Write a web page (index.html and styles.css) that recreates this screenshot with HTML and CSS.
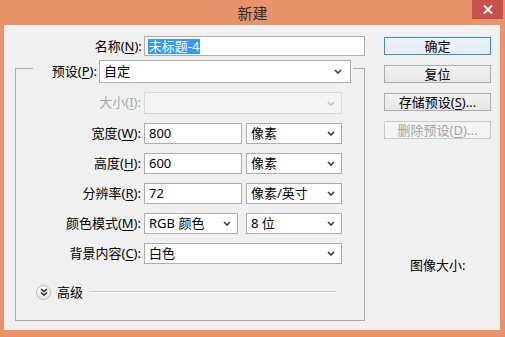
FILE: index.html
```html
<!DOCTYPE html>
<html>
<head>
<meta charset="utf-8">
<link rel="stylesheet" href="styles.css">
</head>
<body>
<div class="window">
  <div class="titlebar">
    <span class="title">新建</span>
    <div class="close">
      <svg width="10" height="9" viewBox="0 0 10 9"><path d="M1 0.5 L9 8.5 M9 0.5 L1 8.5" stroke="#fff" stroke-width="2" fill="none"/></svg>
    </div>
  </div>
  <div class="client">
    <div class="main">
      <div class="name-row">
        <span class="lbl name-lbl">名称(<u>N</u>):</span>
        <div class="field name-input"><span class="sel">未标题-4</span></div>
      </div>
      <fieldset class="group">
        <legend class="legend">
          <div class="preset-row">
            <span class="lbl preset-lbl">预设(<u>P</u>):</span>
            <div class="field select preset"><span>自定</span><svg class="chev" width="8" height="5" viewBox="0 0 8 5"><polyline points="1,1 4,4 7,1"/></svg></div>
          </div>
        </legend>
        <div class="rows">
          <span class="lbl disabled">大小(<u>I</u>):</span>
          <div class="field select dis tall"><span></span><svg class="chev" width="8" height="5" viewBox="0 0 8 5"><polyline points="1,1 4,4 7,1"/></svg></div>

          <span class="lbl">宽度(<u>W</u>):</span>
          <div class="pair">
            <div class="field num">800</div>
            <div class="field select unit"><span>像素</span><svg class="chev" width="8" height="5" viewBox="0 0 8 5"><polyline points="1,1 4,4 7,1"/></svg></div>
          </div>

          <span class="lbl">高度(<u>H</u>):</span>
          <div class="pair">
            <div class="field num">600</div>
            <div class="field select unit"><span>像素</span><svg class="chev" width="8" height="5" viewBox="0 0 8 5"><polyline points="1,1 4,4 7,1"/></svg></div>
          </div>

          <span class="lbl">分辨率(<u>R</u>):</span>
          <div class="pair">
            <div class="field num">72</div>
            <div class="field select unit"><span>像素/英寸</span><svg class="chev" width="8" height="5" viewBox="0 0 8 5"><polyline points="1,1 4,4 7,1"/></svg></div>
          </div>

          <span class="lbl">颜色模式(<u>M</u>):</span>
          <div class="pair mode">
            <div class="field select cmode"><span>RGB 颜色</span><svg class="chev" width="8" height="5" viewBox="0 0 8 5"><polyline points="1,1 4,4 7,1"/></svg></div>
            <div class="field select unit"><span>8 位</span><svg class="chev" width="8" height="5" viewBox="0 0 8 5"><polyline points="1,1 4,4 7,1"/></svg></div>
          </div>

          <span class="lbl">背景内容(<u>C</u>):</span>
          <div class="field select"><span>白色</span><svg class="chev" width="8" height="5" viewBox="0 0 8 5"><polyline points="1,1 4,4 7,1"/></svg></div>
        </div>
        <div class="advanced">
          <div class="adv-btn">
            <svg width="8" height="8" viewBox="0 0 8 8"><polyline points="1,1 4,3.5 7,1"/><polyline points="1,4.5 4,7 7,4.5"/></svg>
          </div>
          <span class="adv-text">高级</span>
          <div class="adv-line"></div>
        </div>
      </fieldset>
    </div>
    <div class="side">
      <div class="btn default">确定</div>
      <div class="btn">复位</div>
      <div class="btn">存储预设(<u>S</u>)...</div>
      <div class="btn btn-dis">删除预设(<u>D</u>)...</div>
      <div class="imgsize">图像大小:</div>
    </div>
  </div>
</div>
</body>
</html>
```

FILE: styles.css
```css
* { box-sizing: border-box; }
html, body { margin: 0; padding: 0; }
body {
  width: 505px;
  height: 337px;
  overflow: hidden;
  background: #E9936B;
  font-family: "Noto Sans", "Noto Sans CJK SC", sans-serif;
  font-size: 13px;
  color: #000;
}
u { text-decoration: underline; text-underline-offset: 2px; }

.window { display: flex; flex-direction: column; height: 337px; }

.titlebar {
  height: 25px;
  display: grid;
  grid-template-columns: 1fr auto 1fr;
  align-items: start;
}
.title {
  grid-column: 2;
  font-family: "Noto Sans CJK SC", sans-serif;
  font-size: 15px;
  line-height: 25px;
  color: #2e2e2e;
}
.close {
  grid-column: 3;
  justify-self: end;
  width: 31px;
  height: 19px;
  margin-right: 2px;
  background: #C75050;
  display: flex;
  align-items: center;
  justify-content: center;
}

.client {
  margin: 0 5px 0 4px;
  height: 305px;
  background: #F0F0F0;
  display: flex;
  padding-top: 11px;
  border-bottom: 4px solid #F7EFE8;
}

.main { width: 361px; }

.lbl {
  text-align: right;
  line-height: 21px;
  white-space: nowrap;
}
.disabled { color: #A8A8A8; }

.name-row { display: flex; align-items: center; gap: 2px; height: 20px; }
.name-lbl { width: 139px; }

.field {
  height: 21px;
  border: 1px solid #ABADB3;
  background: #fff;
  padding-left: 4px;
  line-height: 19px;
  white-space: nowrap;
}
.name-input { width: 223px; height: 20px; padding-left: 3px; line-height: 18px; }
.sel {
  background: #3399FF;
  color: #fff;
  display: inline-block;
  line-height: 15px;
  padding: 0 1px;
}

.select {
  display: flex;
  align-items: center;
  justify-content: space-between;
  padding-right: 6px;
}
.chev polyline { fill: none; stroke: #3a3a3a; stroke-width: 1.6; }
.select.dis { background: #F4F4F4; border-color: #D9D9D9; }
.select.dis .chev polyline { stroke: #C4C4C4; }
.tall { height: 22px; }

.group {
  width: 350px;
  margin: -2px 0 0 11px;
  padding: 0 0 21px 0;
  border: 1px solid #ABABAB;
  min-width: 0;
}
.legend {
  margin-left: 17px;
  padding: 6px 2px 0 0;
}
.preset-row { display: flex; align-items: center; gap: 2px; }
.preset-lbl { width: 64px; }
.preset { width: 252px; height: 23px; padding-right: 8px; line-height: 21px; }

.rows {
  margin-top: 9px;
  display: grid;
  grid-template-columns: 125px 198px;
  column-gap: 3px;
  row-gap: 9px;
}
.pair { display: flex; justify-content: space-between; }
.num { width: 98px; }
.unit { width: 96px; }
.cmode { width: 94px; }

.advanced {
  margin: 21px 28px 0 20px;
  height: 14px;
  display: flex;
  align-items: center;
}
.adv-btn {
  width: 15px;
  height: 15px;
  border-radius: 50%;
  border: 1px solid #B9B9B9;
  background: linear-gradient(#FFFFFF, #E6E6E6);
  display: flex;
  align-items: center;
  justify-content: center;
}
.adv-btn polyline { fill: none; stroke: #222; stroke-width: 1.4; }
.adv-text { margin-left: 6px; line-height: 16px; }
.adv-line {
  flex: 1;
  margin-left: 6px;
  border-top: 1px solid #C6C6C6;
  border-bottom: 1px solid #FFFFFF;
}

.side {
  margin-left: 19px;
  display: flex;
  flex-direction: column;
}
.btn {
  width: 107px;
  height: 18px;
  margin-top: 10px;
  border: 1px solid #ACACAC;
  background: linear-gradient(#F2F2F2, #E6E6E6);
  text-align: center;
  line-height: 16px;
  white-space: nowrap;
}
.btn.default { margin-top: 1px; border-color: #3C8CD8; background: linear-gradient(#EEF3F8, #E4ECF4); }
.btn-dis { color: #A3A3A3; border-color: #C9C9C9; background: #F4F4F4; }

.imgsize {
  margin: 118px 0 0 26px;
  line-height: 17px;
}
```
